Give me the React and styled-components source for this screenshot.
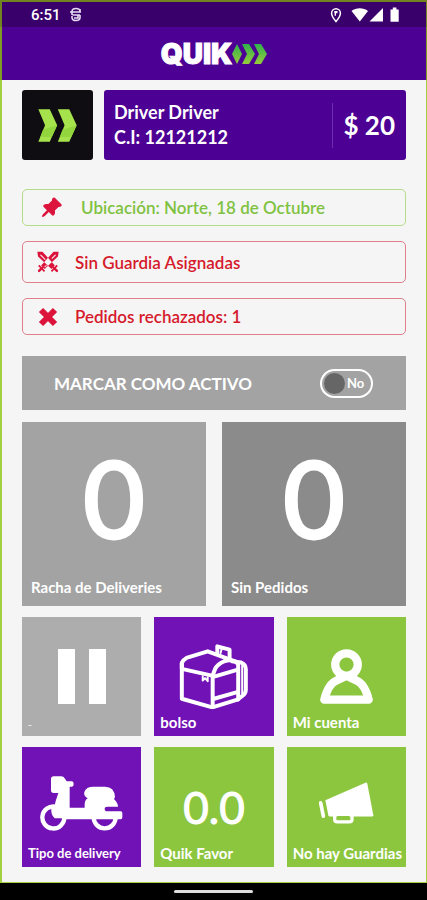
import { useState } from 'react';
import styled, { createGlobalStyle } from 'styled-components';
import { BsPinAngleFill } from 'react-icons/bs';

function App() {
  const [active, setActive] = useState(false);

  return (
    <Screen>
      <GlobalStyle />
      <StatusBar>
        <StatusGroup>
          <span>6:51</span>
          <DebugIcon />
        </StatusGroup>
        <StatusIcons />
      </StatusBar>

      <Header>
        <Brand>QUIK</Brand>
        <BrandArrows />
      </Header>

      <Content>
        <ProfileRow>
          <Avatar>
            <AvatarArrows />
          </Avatar>
          <ProfileCard>
            <ProfileInfo>
              <span>Driver Driver</span>
              <span>C.I: 12121212</span>
            </ProfileInfo>
            <Balance>$ 20</Balance>
          </ProfileCard>
        </ProfileRow>

        <Notices>
          <Notice $tone="green">
            <NoticeIcon $wide>
              <BsPinAngleFill size={21} stroke="currentColor" strokeWidth="1" />
            </NoticeIcon>
            Ubicación: Norte, 18 de Octubre
          </Notice>
          <Notice $tall>
            <NoticeIcon>
              <SwordsIcon />
            </NoticeIcon>
            Sin Guardia Asignadas
          </Notice>
          <Notice>
            <NoticeIcon>
              <CrossIcon />
            </NoticeIcon>
            Pedidos rechazados: 1
          </Notice>
        </Notices>

        <ActiveRow>
          <label htmlFor="active">MARCAR COMO ACTIVO</label>
          <Switch>
            <SwitchInput
              id="active"
              type="checkbox"
              role="switch"
              checked={active}
              onChange={(e) => setActive(e.target.checked)}
            />
            <SwitchText>{active ? 'Sí' : 'No'}</SwitchText>
          </Switch>
        </ActiveRow>

        <Stats>
          <Stat $bg="#a3a3a3">
            <StatValue>0</StatValue>
            <StatLabel>Racha de Deliveries</StatLabel>
          </Stat>
          <Stat $bg="#8b8b8b">
            <StatValue>0</StatValue>
            <StatLabel>Sin Pedidos</StatLabel>
          </Stat>
        </Stats>

        <Tiles>
          <Tile $bg="#adadad" aria-label="Pausa">
            <TileBody>
              <PauseIcon />
            </TileBody>
            <TileLabel $tiny>_</TileLabel>
          </Tile>
          <Tile $bg="#7012b5">
            <TileBody>
              <BagIcon />
            </TileBody>
            <TileLabel>bolso</TileLabel>
          </Tile>
          <Tile $bg="#8cc63f">
            <TileBody>
              <UserIcon />
            </TileBody>
            <TileLabel>Mi cuenta</TileLabel>
          </Tile>
          <Tile $bg="#7012b5">
            <TileBody $raised>
              <ScooterIcon />
            </TileBody>
            <TileLabel $small>Tipo de delivery</TileLabel>
          </Tile>
          <Tile $bg="#8cc63f">
            <TileBody>
              <TileValue>0.0</TileValue>
            </TileBody>
            <TileLabel>Quik Favor</TileLabel>
          </Tile>
          <Tile $bg="#8cc63f">
            <TileBody $raised>
              <MegaphoneIcon />
            </TileBody>
            <TileLabel>No hay Guardias</TileLabel>
          </Tile>
        </Tiles>
      </Content>

      <NavBar>
        <HomeHandle />
      </NavBar>
    </Screen>
  );
}

export default App;

// icons
function DebugIcon() {
  return (
    <svg width="12" height="15" viewBox="0 0 12 15" fill="none" stroke="#e6dcf2" strokeWidth="1.6">
      <path d="M2 4.5C2 2.5 3.5 1.5 6 1.5s4 1 4 3M0 5h11M10 8H2.500M2 5v3M10 8v2.500c0 2-1.500 3-4 3s-4-1-4-3V9M10 2v3M4 11h4V8" />
    </svg>
  );
}

function StatusIcons() {
  return (
    <svg width="70" height="16" viewBox="0 0 70 16" fill="#fff">
      <path
        d="M6 14.500C3 11 1.600 8.700 1.600 6.200a4.400 4.400 0 0 1 8.800 0C10.400 8.700 9 11 6 14.500Z"
        fill="none"
        stroke="#fff"
        strokeWidth="1.500"
      />
      <path d="M4.300 4h3.200v2.200H6v2.600H4.600V6.200h-.3z" />
      <path d="M21.500 4c4.500-3.600 12-3.600 16.500 0l-8.200 10.500z" />
      <path d="M53 1v13.500H39.500z" />
      <path d="M60.500 2.500h2.300V.6h3.600v1.900h2.300v12.300h-8.200z" />
    </svg>
  );
}

function BrandArrows() {
  return (
    <svg width="35" height="22" viewBox="0 0 35 22">
      <defs>
        <linearGradient id="arrow" x1="0" y1="0" x2="0" y2="1">
          <stop offset="0" stopColor="#2fb24c" />
          <stop offset="1" stopColor="#97cb3c" />
        </linearGradient>
      </defs>
      <g fill="url(#arrow)">
        <path d="M5 1 0 11l5 10 5-10z" />
        <path d="M10 1h7l6 10-6 10h-7l5-10z" />
        <path d="M22 1h7l6 10-6 10h-7l5-10z" />
      </g>
    </svg>
  );
}

function AvatarArrows() {
  return (
    <svg width="39" height="33" viewBox="0 0 116 98">
      <g fill="#a6e24c">
        <path d="M1 1h34l22 47-22 49H1l20-49z" />
        <path d="M59 1h34l22 47-22 49H59l20-49z" />
      </g>
      <g fill="#93d53c">
        <path d="m15 62 42-14-16 35-34 0z" />
        <path d="m73 62 42-14-16 35-34 0z" />
      </g>
    </svg>
  );
}

function SwordsIcon() {
  return (
    <svg width="22" height="22" viewBox="0 0 64 64" fill="none" stroke="currentColor">
      <path d="M1 2h15l36 40-10 10L3 16zM63 2H48L12 42l10 10 39-36z" fill="currentColor" stroke="none" />
      <path d="m10 11 14 14M54 11 43 22M28 42l-6 4" stroke="#f5f5f5" strokeWidth="3" />
      <path d="m5 42 17 17M59 42 42 59" strokeWidth="5" />
      <path d="m15 49-9 9M49 49l9 9" strokeWidth="7" strokeLinecap="round" />
    </svg>
  );
}

function CrossIcon() {
  return (
    <svg width="20" height="20" viewBox="0 0 20 20" fill="none" stroke="currentColor">
      <path d="m3 3 14 14M17 3 3 17" strokeWidth="6" />
    </svg>
  );
}

function PauseIcon() {
  return (
    <svg width="48" height="55" viewBox="0 0 48 55" fill="#fff">
      <path d="M0 0h17v55H0zM31 0h17v55H31z" />
    </svg>
  );
}

function BagIcon() {
  return (
    <svg
      width="69"
      height="65"
      viewBox="513 93 207 196"
      fill="none"
      stroke="#fff"
      strokeWidth="12"
      strokeLinejoin="round"
      strokeLinecap="round"
    >
      <path d="M521 150q4-10 14-15l64-20 70 26q-48 4-54 48L521 168z" />
      <path d="M521 150v108l92 26 78-24V156q-6-15-28-15" />
      <path d="M614 188v94M616 192l74-22M618 258l70-20" />
      <path d="M672 145l28 4q14 6 14 20v62q0 12-10 18l-14 11" />
      <path d="M703 152v92" strokeWidth="6" />
      <path d="M628 119v-19l37 10v30" />
      <path d="M641 108l-3 12" strokeWidth="6" />
      <path d="M584 190v13l7-7 8 9v-12" strokeWidth="6" />
    </svg>
  );
}

function UserIcon() {
  return (
    <svg
      width="53"
      height="55"
      viewBox="149 117 160 166"
      fill="none"
      stroke="#fff"
      strokeWidth="25"
      strokeLinejoin="round"
    >
      <circle cx="229" cy="164" r="34" />
      <path d="M162 270h134q-12-48-37-58l-30-14-30 14q-25 10-37 58z" />
    </svg>
  );
}

function ScooterIcon() {
  return (
    <svg width="83" height="55" viewBox="92 107 249 165" fill="#fff">
      <path d="M125 116q0-8 8-8h22q8 0 12 7l5 8h16q5 0 5 8t-5 8h-7v63h45q-2-22 9-28-13-7-10-19 5-16 28-16h34q28 0 30 31l-3 6q12 12 12 23h-32q-8 0-8 7t8 7h40q5 0 5 5v13q0 6-5 6H172q-3 3-10 3l-28-36q4-22 13-46h-14q-8 0-8-8z" />
      <g fill="none" stroke="#fff" strokeWidth="13">
        <path d="M138 199a33 33 0 1 0 27 34" />
        <path d="M253 231a33 33 0 0 0 66 0" />
      </g>
      <path d="M126 204q10-8 20-8l22 38h-32q-12-10-10-30z" />
    </svg>
  );
}

function MegaphoneIcon() {
  return (
    <svg width="56" height="42" viewBox="145 127 168 125" fill="#fff">
      <path d="M167 181 289 128q3 0 4 4l18 94q0 4-4 4H181q-4 0-5-4z" />
      <path d="M153 189l8 40" stroke="#fff" strokeWidth="11" strokeLinecap="round" />
      <path d="M195 228v10q0 8 8 8h36q8 0 8-8v-10" fill="none" stroke="#fff" strokeWidth="10" />
      <path d="M203 232h36" stroke="#8cc63f" strokeWidth="7" />
    </svg>
  );
}

const GlobalStyle = createGlobalStyle`
  * {
    box-sizing: border-box;
  }
  body {
    margin: 0;
    font-family: Lato, 'Open Sans', sans-serif;
    background: #f5f5f5;
  }
`;

const Screen = styled.div`
  min-height: 100vh;
  display: flex;
  flex-direction: column;
`;

const StatusBar = styled.div`
  height: 27px;
  padding: 0 26px 0 29px;
  display: flex;
  align-items: center;
  justify-content: space-between;
  border: solid #71841f;
  border-width: 2px 1px 0 2px;
  background: #39006b;
`;

const StatusGroup = styled.div`
  display: flex;
  align-items: center;
  gap: 9px;
  font-family: Roboto, sans-serif;
  font-size: 15px;
  font-weight: 500;
  color: #fff;
`;

const Header = styled.header`
  height: 53px;
  display: flex;
  align-items: center;
  justify-content: center;
  border: solid #7f9a24;
  border-width: 0 1px 0 2px;
  background: #4d0094;
`;

const Brand = styled.h1`
  margin: 0;
  font-family: Inter, sans-serif;
  font-size: 28px;
  font-weight: 900;
  line-height: 32px;
  -webkit-text-stroke: 1px #fff;
  color: #fff;
`;

const Content = styled.main`
  flex: 1;
  padding: 10px 20px 14px;
  border: solid #a3cf43;
  border-width: 0 1px 1px 2px;
  background: #f5f5f5;
`;

const ProfileRow = styled.section`
  height: 70px;
  display: flex;
  gap: 11px;
`;

const Avatar = styled.div`
  width: 71px;
  display: flex;
  align-items: center;
  justify-content: center;
  border-radius: 3px;
  background: #0f0d12;
`;

const ProfileCard = styled.div`
  flex: 1;
  padding: 0 11px 0 10px;
  display: flex;
  align-items: center;
  justify-content: space-between;
  border-radius: 3px;
  background: #4d0094;
  color: #fff;
`;

const ProfileInfo = styled.div`
  display: flex;
  flex-direction: column;
  font-size: 18px;
  font-weight: 700;
  line-height: 25px;
`;

const Balance = styled.div`
  padding-left: 10px;
  border-left: 1px solid #6f2cab;
  font-size: 26px;
  font-weight: 700;
  line-height: 45px;
`;

const Notices = styled.section`
  margin-top: 29px;
  display: flex;
  flex-direction: column;
  gap: 15px;
`;

const Notice = styled.div`
  height: ${(props) => (props.$tall ? '42px' : '37px')};
  padding: 0 15px;
  display: flex;
  align-items: center;
  gap: 17px;
  border: 1px solid ${(props) => (props.$tone === 'green' ? '#b5dc8a' : '#e07f8a')};
  border-radius: 5px;
  font-size: 17px;
  font-weight: 600;
  color: ${(props) => (props.$tone === 'green' ? '#7fc241' : '#d61a2c')};
`;

const NoticeIcon = styled.span`
  width: ${(props) => (props.$wide ? '26px' : '20px')};
  display: flex;
  justify-content: center;
  color: #dc143c;

  svg {
    flex-shrink: 0;
  }
`;

const ActiveRow = styled.section`
  height: 54px;
  margin-top: 21px;
  padding: 0 33px 0 32px;
  display: flex;
  align-items: center;
  justify-content: space-between;
  background: #a3a3a3;
  font-size: 17px;
  font-weight: 700;
  color: #fff;
`;

const Switch = styled.span`
  display: grid;
  align-items: center;
`;

const SwitchInput = styled.input`
  grid-area: 1 / 1;
  appearance: none;
  width: 53px;
  height: 29px;
  margin: 0;
  padding: 2px;
  display: flex;
  border: 2px solid #fff;
  border-radius: 15px;
  cursor: pointer;

  &::before {
    content: '';
    width: 21px;
    height: 21px;
    border-radius: 50%;
    background: #666;
  }
  &:checked {
    justify-content: flex-end;
    background: #8cc63f;
  }
`;

const SwitchText = styled.span`
  grid-area: 1 / 1;
  padding-left: 27px;
  font-size: 13px;
  pointer-events: none;
`;

const Stats = styled.section`
  margin-top: 12px;
  display: grid;
  grid-template-columns: 1fr 1fr;
  gap: 16px;
`;

const Stat = styled.div`
  aspect-ratio: 1;
  padding: 0 9px 8px;
  display: flex;
  flex-direction: column;
  background: ${(props) => props.$bg};
  color: #fff;
`;

const StatValue = styled.div`
  flex: 1;
  padding-bottom: 4px;
  display: flex;
  align-items: center;
  justify-content: center;
  font-size: 106px;
  font-weight: 400;
  line-height: 110px;
  -webkit-text-stroke: 3px #fff;
`;

const StatLabel = styled.div`
  font-size: 15px;
  font-weight: 700;
  line-height: 22px;
`;

const Tiles = styled.section`
  margin-top: 11px;
  display: grid;
  grid-template-columns: repeat(3, 1fr);
  gap: 11px 13px;
`;

const Tile = styled.button`
  aspect-ratio: 1;
  min-width: 0;
  padding: 0;
  display: grid;
  grid-template: minmax(0, 1fr) / minmax(0, 1fr);
  border: none;
  background: ${(props) => props.$bg};
  font-family: inherit;
  color: #fff;
  cursor: pointer;
`;

const TileBody = styled.span`
  grid-area: 1 / 1;
  padding-bottom: ${(props) => (props.$raised ? '8px' : '0')};
  display: flex;
  align-items: center;
  justify-content: center;
`;

const TileValue = styled.span`
  font-size: 44px;
  font-weight: 400;
  -webkit-text-stroke: 1px #fff;
`;

const TileLabel = styled.span`
  grid-area: 1 / 1;
  place-self: end start;
  padding: 0 0 5px 6px;
  font-size: ${(props) => (props.$tiny ? '8px' : props.$small ? '13px' : '15px')};
  font-weight: 700;
  line-height: 18px;
  white-space: nowrap;
`;

const NavBar = styled.div`
  height: 17px;
  display: flex;
  align-items: center;
  justify-content: center;
  background: #000;
`;

const HomeHandle = styled.div`
  width: 79px;
  height: 3px;
  border-radius: 2px;
  background: #ddd;
`;
